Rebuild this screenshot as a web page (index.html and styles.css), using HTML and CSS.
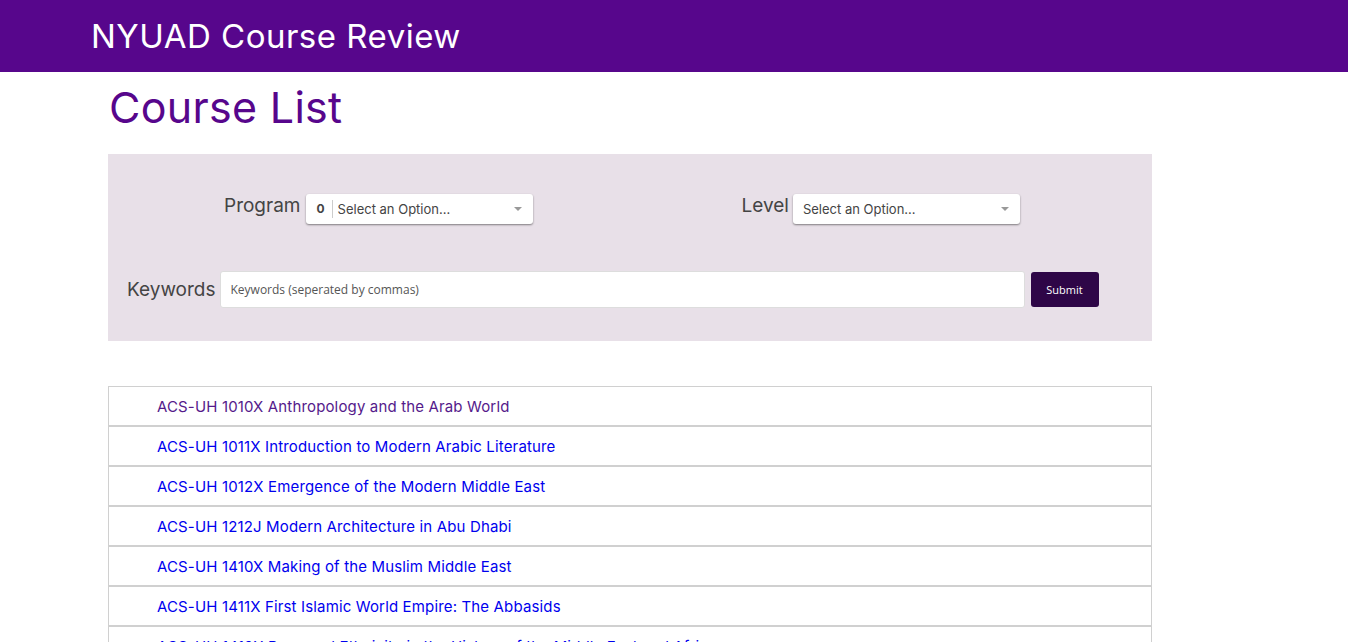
FILE: index.html
```html
<!DOCTYPE html>
<html>
<head>
<meta charset="utf-8">
<title>NYUAD Course Review</title>
<link rel="stylesheet" href="styles.css">
</head>
<body>
<header class="topbar">
  <div class="brand">NYUAD Course Review</div>
</header>
<main class="main">
  <h1 class="page-title">Course List</h1>
  <form class="filters">
    <div class="filter-row">
      <div class="group group-program">
        <label class="label">Program</label>
        <div class="select">
          <span class="badge">0</span>
          <span class="select-text">Select an Option...</span>
          <span class="arrow"></span>
        </div>
      </div>
      <div class="group group-level">
        <label class="label">Level</label>
        <div class="select">
          <span class="select-text plain">Select an Option...</span>
          <span class="arrow"></span>
        </div>
      </div>
    </div>
    <div class="keyword-row">
      <label class="label">Keywords</label>
      <input class="keywords" type="text" placeholder="Keywords (seperated by commas)">
      <button class="submit" type="button">Submit</button>
    </div>
  </form>
  <ul class="courses">
    <li class="course"><a class="visited" href="#">ACS-UH 1010X Anthropology and the Arab World</a></li>
    <li class="course"><a href="#">ACS-UH 1011X Introduction to Modern Arabic Literature</a></li>
    <li class="course"><a href="#">ACS-UH 1012X Emergence of the Modern Middle East</a></li>
    <li class="course"><a href="#">ACS-UH 1212J Modern Architecture in Abu Dhabi</a></li>
    <li class="course"><a href="#">ACS-UH 1410X Making of the Muslim Middle East</a></li>
    <li class="course"><a href="#">ACS-UH 1411X First Islamic World Empire: The Abbasids</a></li>
    <li class="course"><a href="#">ACS-UH 1412X Race and Ethnicity in the History of the Middle East and Africa</a></li>
    <li class="course"><a href="#">ACS-UH 1413X Ottoman Empire</a></li>
  </ul>
</main>
</body>
</html>
```
FILE: styles.css
```css
* { box-sizing: border-box; }
html, body { margin: 0; padding: 0; }
body {
  font-family: Inter, "Noto Sans", sans-serif;
  background: #fff;
  color: #444;
}
.topbar {
  background: #57068c;
  height: 72px;
  padding-left: 91px;
  display: flex;
  align-items: center;
}
.brand {
  color: #fff;
  font-size: 33px;
  letter-spacing: 0.5px;
}
.main {
  width: 1044px;
  margin-left: 108px;
}
.page-title {
  margin: 10px 0 0 1px;
  font-weight: 400;
  font-size: 43px;
  line-height: 50px;
  letter-spacing: 0.3px;
  color: #57068c;
}
.filters {
  margin-top: 22px;
  background: #e8e0e8;
  padding: 40px 0 33px 0;
}
.filter-row {
  display: flex;
  height: 30px;
}
.group {
  display: flex;
  align-items: flex-start;
}
.group-program { margin-left: 116px; }
.group-level { margin-left: 208px; }
.label {
  font-size: 19px;
  color: #444;
  line-height: 24px;
  margin-right: 6px;
}
.group-level .label { margin-right: 4px; }
.select {
  width: 227px;
  height: 30px;
  background: #fff;
  border-radius: 3px;
  box-shadow: 0 1px 2px rgba(0,0,0,0.45);
  display: flex;
  align-items: center;
  position: relative;
  font-family: Inter, sans-serif;
  font-size: 13px;
  color: #444;
}
.badge {
  font-weight: 700;
  font-size: 12px;
  padding: 0 7px 0 10px;
  border-right: 1px solid #ccc;
  line-height: 18px;
  color: #444;
}
.select-text { padding-left: 5px; }
.select-text.plain { padding-left: 10px; }
.arrow {
  position: absolute;
  right: 11px;
  top: 13px;
  width: 0;
  height: 0;
  border-left: 4px solid transparent;
  border-right: 4px solid transparent;
  border-top: 4px solid #999;
}
.keyword-row {
  display: flex;
  align-items: center;
  margin-top: 47px;
  padding-left: 19px;
}
.keyword-row .label { margin-right: 4px; }
.keywords {
  width: 805px;
  height: 37px;
  border: 1px solid #ddd;
  border-radius: 3px;
  background: #fff;
  padding: 0 10px;
  font-family: "Open Sans", sans-serif;
  font-size: 12px;
  color: #555;
  outline: none;
}
.keywords::placeholder { color: #555; }
.submit {
  margin-left: 6px;
  width: 68px;
  height: 35px;
  background: #2e0647;
  color: #fff;
  border: none;
  border-radius: 3px;
  font-family: "Open Sans", sans-serif;
  font-size: 11px;
}
.courses {
  list-style: none;
  margin: 45px 0 0 0;
  padding: 0;
}
.course {
  border: 1px solid #d0d0d0;
  height: 40px;
  display: flex;
  align-items: center;
  padding-left: 48px;
}
.course a {
  font-size: 15px;
  letter-spacing: 0.15px;
  color: #0000ee;
  text-decoration: none;
}
.course a.visited { color: #551a8b; }
```
